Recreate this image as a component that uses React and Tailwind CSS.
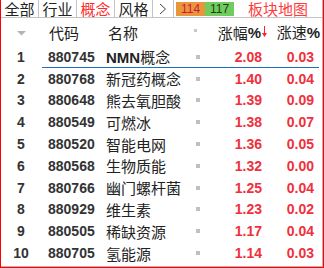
import React from 'react';

const rows = [
  ['1', '880745', 'NMN概念', '2.08', '0.03'],
  ['2', '880768', '新冠药概念', '1.40', '0.04'],
  ['3', '880648', '熊去氧胆酸', '1.39', '0.09'],
  ['4', '880549', '可燃冰', '1.38', '0.07'],
  ['5', '880520', '智能电网', '1.36', '0.05'],
  ['6', '880568', '生物质能', '1.32', '0.00'],
  ['7', '880766', '幽门螺杆菌', '1.25', '0.04'],
  ['8', '880929', '维生素', '1.23', '0.02'],
  ['9', '880505', '稀缺资源', '1.17', '0.04'],
  ['10', '880705', '氢能源', '1.14', '0.03'],
];

const tabs = ['全部', '行业', '概念', '风格'];

const cjk = "font-['Noto_Sans_CJK_SC',sans-serif]";
const num = "font-['Liberation_Sans',Arial,sans-serif] font-bold";

export default function App() {
  return (
    <div className="w-[324px] h-[268px] bg-white border-l border-r border-b border-[#ff0000] overflow-hidden">
      <div className="h-full border-r border-b border-[#b4b4b4]">
        {/* Tab bar */}
        <div className={`h-[18px] flex items-stretch border-b border-[#c4c4c4] text-[15px] leading-[17px] text-[#222] ${cjk}`}>
          {tabs.map((t) => (
            <div
              key={t}
              className={`w-[38px] flex items-center justify-center border-r border-[#c4c4c4] ${t === '概念' ? 'text-[#ff2a2a]' : ''}`}
            >
              {t}
            </div>
          ))}
          <div className="w-[21px] flex items-center justify-center border-r border-[#c4c4c4]">
            <svg width="8" height="12" viewBox="0 0 8 12">
              <path d="M1 1 L6.5 6 L1 11" fill="none" stroke="#444" strokeWidth="1" />
            </svg>
          </div>
          <div className="flex items-center ml-[2px]">
            <div className="w-[29px] h-[14px] bg-[#e8963c] text-[#d4143c] text-[12px] leading-none flex items-center justify-center font-['Liberation_Sans',Arial,sans-serif]">
              114
            </div>
            <div className="w-[29px] h-[14px] bg-[#70cc5c] text-[#1e3c14] text-[12px] leading-none flex items-center justify-center font-['Liberation_Sans',Arial,sans-serif]">
              117
            </div>
          </div>
          <div className="ml-[14px] flex items-center text-[#ff3c3c]">板块地图</div>
        </div>

        {/* Header */}
        <div className="h-[28px] flex items-center text-[15px] leading-none text-[#222]">
          <div className="w-[40px] flex justify-center">
            <svg width="9" height="5" viewBox="0 0 9 5" className="mt-[2px]">
              <path d="M0 0 H9 L4.5 4.5 Z" fill="#b4b4b4" />
            </svg>
          </div>
          <div className={`w-[62px] pl-[8px] ${cjk}`}>代码</div>
          <div className={`w-[88px] pl-[5px] ${cjk}`}>名称</div>
          <div className="w-[12px] flex items-center">
            <div className="w-[3px] h-[3px] bg-[#c8c8c8] ml-[3px] -mt-[4px]" />
          </div>
          <div className={`w-[64px] flex items-center justify-end ${cjk}`}>
            涨幅<span className={num}>%</span>
            <svg width="5" height="12" viewBox="0 0 5 12" className="ml-[1px]">
              <path d="M2.5 0 V9" stroke="#ff2020" strokeWidth="1" />
              <path d="M0 7 H5 L2.5 11 Z" fill="#ff2020" />
            </svg>
          </div>
          <div className={`w-[53px] text-right ${cjk}`}>
            涨速<span className={num}>%</span>
          </div>
        </div>

        {/* Rows */}
        {rows.map(([i, code, name, chg, spd], idx) => (
          <div key={code} className="h-[21.8px] flex items-center relative leading-none">
            <div className={`w-[40px] text-center text-[14px] text-[#333] ${num}`}>{i}</div>
            <div className={`w-[62px] pl-[7px] text-[14px] text-[#333] ${num}`}>{code}</div>
            <div className={`w-[88px] pl-[3px] text-[15px] text-[#222] whitespace-nowrap ${idx === 0 ? num : cjk}`}>
              {idx === 0 ? (
                <>
                  NMN<span className={`${cjk} font-normal`}>概念</span>
                </>
              ) : (
                name
              )}
            </div>
            <div className="w-[12px] flex items-center">
              <div className="w-[4px] h-[4px] bg-[#c0c0c0] ml-[5px]" />
            </div>
            <div className={`w-[59px] text-right text-[14px] text-[#f0303c] ${num}`}>{chg}</div>
            <div className={`w-[52px] text-right text-[14px] text-[#f0303c] ${num}`}>{spd}</div>
            {idx === 0 && (
              <div className="absolute left-[41px] right-[3px] bottom-0 h-[1px] bg-[#2070c0]" />
            )}
          </div>
        ))}
      </div>
    </div>
  );
}
